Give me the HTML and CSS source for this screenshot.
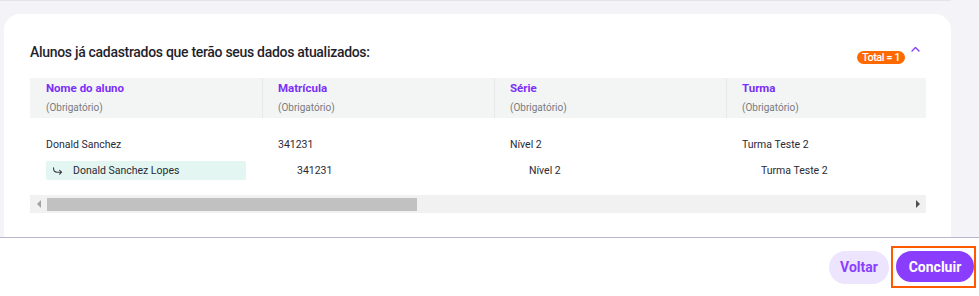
FILE: index.html
```html
<!DOCTYPE html>
<html lang="pt-BR">
<head>
<meta charset="utf-8">
<title>Alunos já cadastrados</title>
<link rel="stylesheet" href="styles.css">
</head>
<body>
<div class="modal">
  <div class="modal-body">
    <div class="scroll-area">
      <section class="card">
        <div class="card-head">
          <h2 class="card-title">Alunos já cadastrados que terão seus dados atualizados:</h2>
          <div class="card-tools">
            <span class="badge">Total = 1</span>
            <svg class="chevron" width="9" height="6" viewBox="0 0 9 6"><path d="M1 5 L4.5 1.5 L8 5" fill="none" stroke="#8b3dfc" stroke-width="1.4" stroke-linecap="round" stroke-linejoin="round"/></svg>
          </div>
        </div>
        <div class="table-wrap">
          <div class="table">
            <div class="thead">
              <div class="th"><div class="th-name">Nome do aluno</div><div class="th-sub">(Obrigatório)</div></div>
              <div class="th sep"><div class="th-name">Matrícula</div><div class="th-sub">(Obrigatório)</div></div>
              <div class="th sep"><div class="th-name">Série</div><div class="th-sub">(Obrigatório)</div></div>
              <div class="th sep"><div class="th-name">Turma</div><div class="th-sub">(Obrigatório)</div></div>
            </div>
            <div class="tbody">
              <div class="tr">
                <div class="td">Donald Sanchez</div>
                <div class="td">341231</div>
                <div class="td">Nível 2</div>
                <div class="td">Turma Teste 2</div>
              </div>
              <div class="tr tr-new">
                <div class="td"><span class="new-name"><svg class="hook" width="11" height="8" viewBox="0 0 11 8"><path d="M1.5 0.8 C1.5 4 2.5 5.2 5 5.2 L9.5 5.2 M7.6 3.3 L9.6 5.2 L7.6 7.1" fill="none" stroke="#3a3a44" stroke-width="1.1" stroke-linecap="round" stroke-linejoin="round"/></svg>Donald Sanchez Lopes</span></div>
                <div class="td indent">341231</div>
                <div class="td indent">Nível 2</div>
                <div class="td indent">Turma Teste 2</div>
              </div>
            </div>
          </div>
        </div>
        <div class="hscroll">
          <span class="sb-btn"><span class="tri-left"></span></span>
          <span class="sb-track"><span class="sb-thumb"></span></span>
          <span class="sb-btn"><span class="tri-right"></span></span>
        </div>
      </section>
    </div>
    <div class="gutter"></div>
  </div>
  <footer class="modal-footer">
    <button class="btn btn-secondary">Voltar</button>
    <span class="focus-mark"><button class="btn btn-primary">Concluir</button></span>
  </footer>
</div>
</body>
</html>
```
FILE: styles.css
```css
* { box-sizing: border-box; }
html, body { margin: 0; padding: 0; }
body {
  width: 979px;
  height: 296px;
  overflow: hidden;
  background: #f4f4f8;
  font-family: Roboto, "Liberation Sans", sans-serif;
  color: #2a2a36;
}
.modal { display: flex; flex-direction: column; height: 296px; }
.modal-body { display: flex; height: 237px; flex: none; overflow: hidden; }
.scroll-area {
  width: 951px;
  border-top: 1px solid #e4e4ec;
  padding: 13px 0 0 4px;
  display: flex;
}
.gutter { flex: 1; background: #f4f4f8; }
.card {
  flex: 1;
  background: #fff;
  border-radius: 16px 16px 0 0;
  padding: 29px 25px 0 26px;
}
.card-head { display: flex; justify-content: space-between; align-items: flex-start; height: 20px; }
.card-title {
  margin: 0;
  font-size: 14px;
  line-height: 18px;
  font-weight: 500;
  color: #1f1f2c;
  letter-spacing: -0.3px;
}
.card-tools { display: flex; align-items: flex-start; padding-right: 6px; }
.badge {
  margin-top: 8px;
  height: 13px;
  padding: 0 5px;
  border-radius: 7px;
  background: #ff6a00;
  color: #fff;
  font-size: 11px;
  line-height: 13px;
  letter-spacing: -0.5px;
  font-weight: 500;
}
.chevron { margin: 3px 0 0 6px; display: block; }
.table-wrap { margin-top: 15px; width: 896px; overflow: hidden; }
.table { width: 928px; }
.thead { display: grid; grid-template-columns: repeat(4, 232px); background: #f3f5f5; height: 40px; }
.th { padding: 1px 16px 0; }
.th.sep { border-left: 1px solid #e7e9e9; padding-left: 15px; }
.th-name { font-size: 11.5px; line-height: 18px; font-weight: 700; color: #7b2ff7; }
.th-sub { font-size: 10px; line-height: 18px; padding-top: 2px; color: #7a7a80; }
.tbody { padding-top: 15px; }
.tr { display: grid; grid-template-columns: repeat(4, 232px); font-size: 10.5px; line-height: 24px; }
.td { padding-left: 16px; white-space: nowrap; }
.tr-new { margin-top: 4px; line-height: 19px; }
.td.indent { padding-left: 35px; }
.new-name {
  display: flex;
  align-items: center;
  width: 200px;
  height: 19px;
  background: #e3f6f1;
  border-radius: 2px;
  padding-left: 6px;
}
.hook { display: block; margin-right: 10px; margin-top: 1px; }
.hscroll { margin-top: 15px; width: 896px; height: 18px; display: flex; background: #f1f1f1; }
.sb-btn { width: 17px; display: flex; align-items: center; justify-content: center; }
.sb-track { flex: 1; display: flex; align-items: center; }
.sb-thumb { width: 370px; height: 13px; background: #c1c1c1; }
.tri-left { width: 0; height: 0; border-top: 4px solid transparent; border-bottom: 4px solid transparent; border-right: 4px solid #a3a3a3; }
.tri-right { width: 0; height: 0; border-top: 4px solid transparent; border-bottom: 4px solid transparent; border-left: 4px solid #505050; }
.modal-footer {
  height: 59px;
  flex: none;
  border-top: 1px solid #b9b5cc;
  background: #fff;
  display: flex;
  justify-content: flex-end;
  align-items: center;
  gap: 2px;
  padding-right: 3px;
}
.btn {
  border: 0;
  font-family: inherit;
  font-weight: 700;
  font-size: 14px;
  cursor: pointer;
  padding: 0;
}
.btn-secondary { width: 60px; height: 33px; border-radius: 17px; background: #ede4fd; color: #8a3ffc; }
.btn-primary { width: 78px; height: 31px; border-radius: 16px; background: #8a3dfc; color: #fff; display: block; }
.focus-mark { border: 2px solid #ff5a00; padding: 3px 0 4px 3px; }
```
